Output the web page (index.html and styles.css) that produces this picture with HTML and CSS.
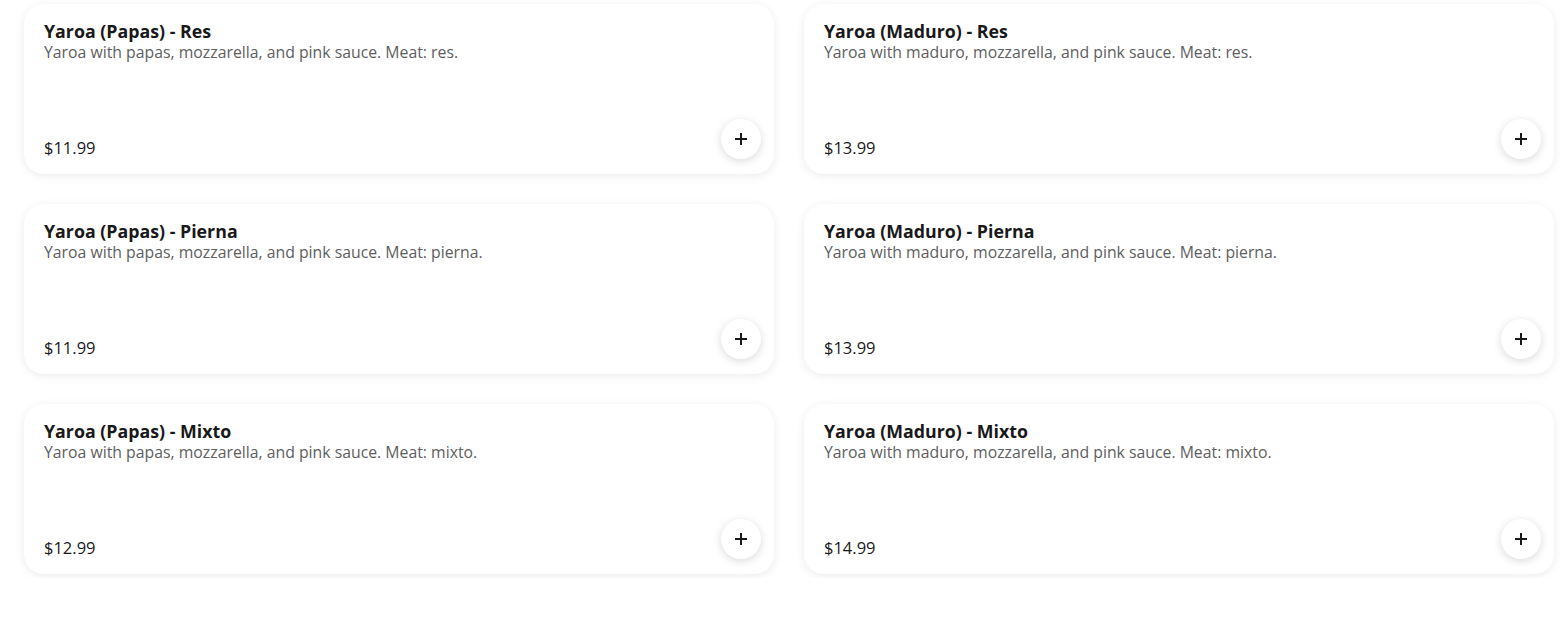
FILE: index.html
```html
<!DOCTYPE html>
<html>
<head>
<meta charset="utf-8">
<link rel="stylesheet" href="styles.css">
</head>
<body>
<div class="grid">
  <div class="card">
    <div class="info">
      <div class="title">Yaroa (Papas) - Res</div>
      <div class="desc">Yaroa with papas, mozzarella, and pink sauce. Meat: res.</div>
    </div>
    <div class="price">$11.99</div>
    <button class="add"><svg width="14" height="14" viewBox="0 0 14 14"><path d="M7 1v12M1 7h12" stroke="#191919" stroke-width="2"/></svg></button>
  </div>
  <div class="card">
    <div class="info">
      <div class="title">Yaroa (Maduro) - Res</div>
      <div class="desc">Yaroa with maduro, mozzarella, and pink sauce. Meat: res.</div>
    </div>
    <div class="price">$13.99</div>
    <button class="add"><svg width="14" height="14" viewBox="0 0 14 14"><path d="M7 1v12M1 7h12" stroke="#191919" stroke-width="2"/></svg></button>
  </div>
  <div class="card">
    <div class="info">
      <div class="title">Yaroa (Papas) - Pierna</div>
      <div class="desc">Yaroa with papas, mozzarella, and pink sauce. Meat: pierna.</div>
    </div>
    <div class="price">$11.99</div>
    <button class="add"><svg width="14" height="14" viewBox="0 0 14 14"><path d="M7 1v12M1 7h12" stroke="#191919" stroke-width="2"/></svg></button>
  </div>
  <div class="card">
    <div class="info">
      <div class="title">Yaroa (Maduro) - Pierna</div>
      <div class="desc">Yaroa with maduro, mozzarella, and pink sauce. Meat: pierna.</div>
    </div>
    <div class="price">$13.99</div>
    <button class="add"><svg width="14" height="14" viewBox="0 0 14 14"><path d="M7 1v12M1 7h12" stroke="#191919" stroke-width="2"/></svg></button>
  </div>
  <div class="card">
    <div class="info">
      <div class="title">Yaroa (Papas) - Mixto</div>
      <div class="desc">Yaroa with papas, mozzarella, and pink sauce. Meat: mixto.</div>
    </div>
    <div class="price">$12.99</div>
    <button class="add"><svg width="14" height="14" viewBox="0 0 14 14"><path d="M7 1v12M1 7h12" stroke="#191919" stroke-width="2"/></svg></button>
  </div>
  <div class="card">
    <div class="info">
      <div class="title">Yaroa (Maduro) - Mixto</div>
      <div class="desc">Yaroa with maduro, mozzarella, and pink sauce. Meat: mixto.</div>
    </div>
    <div class="price">$14.99</div>
    <button class="add"><svg width="14" height="14" viewBox="0 0 14 14"><path d="M7 1v12M1 7h12" stroke="#191919" stroke-width="2"/></svg></button>
  </div>
</div>
</body>
</html>
```
FILE: styles.css
```css
html, body {
  margin: 0;
  padding: 0;
  background: #ffffff;
}
body {
  font-family: "Open Sans", "Lato", sans-serif;
  color: #191919;
}
.grid {
  display: grid;
  grid-template-columns: 750px 750px;
  column-gap: 30px;
  row-gap: 30px;
  padding: 4px 24px;
}
.card {
  position: relative;
  height: 170px;
  box-sizing: border-box;
  border-radius: 20px;
  background: #fff;
  box-shadow: 0 2px 10px rgba(0, 0, 0, 0.08);
  padding: 17px 20px 16px 20px;
  display: flex;
  flex-direction: column;
  justify-content: space-between;
}
.title {
  font-weight: 700;
  font-size: 17.8px;
  line-height: 20px;
  color: #191919;
}
.desc {
  font-size: 15.8px;
  line-height: 23px;
  color: #606060;
}
.price {
  font-size: 16.5px;
  line-height: 20px;
  color: #191919;
}
.add {
  position: absolute;
  right: 13px;
  bottom: 15px;
  width: 40px;
  height: 40px;
  border-radius: 50%;
  border: none;
  background: #fff;
  box-shadow: 0 2px 8px rgba(0, 0, 0, 0.15);
  display: flex;
  align-items: center;
  justify-content: center;
  padding: 0;
}
```
